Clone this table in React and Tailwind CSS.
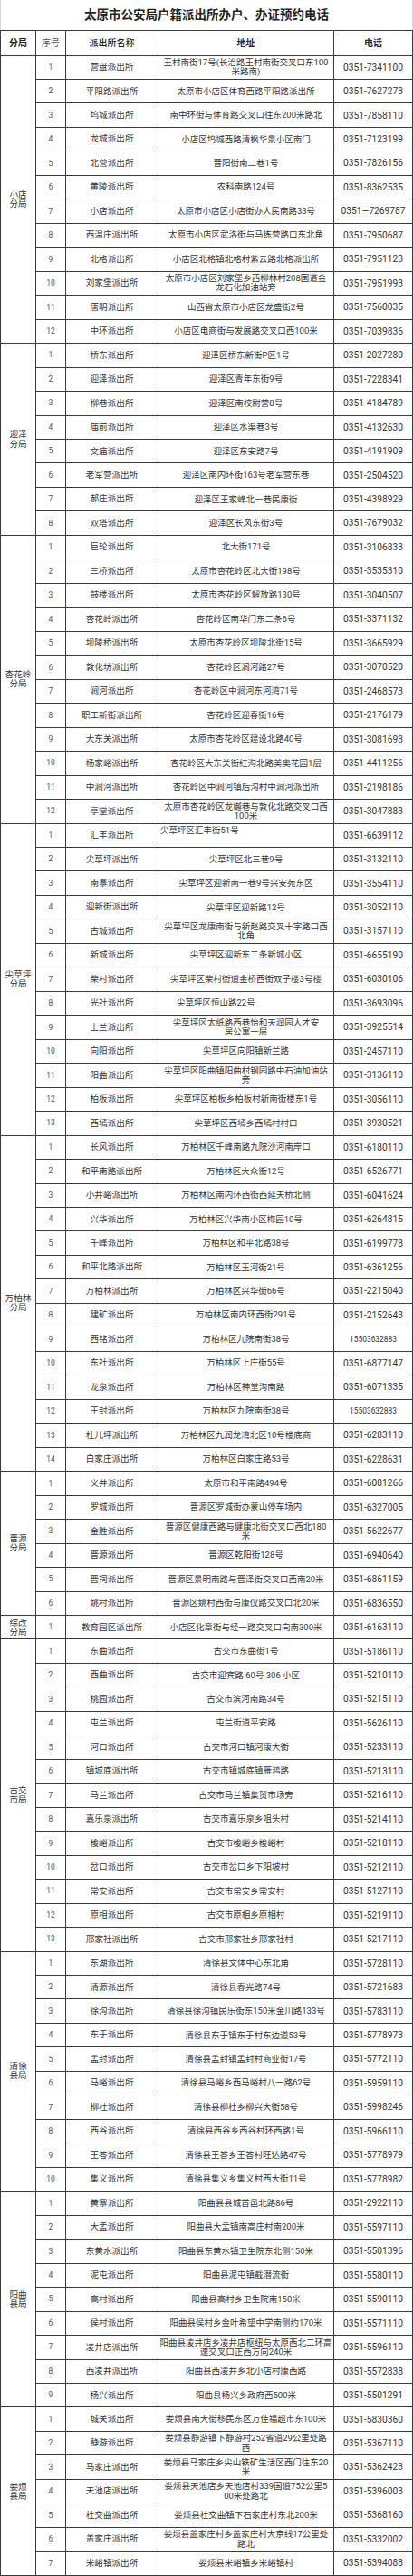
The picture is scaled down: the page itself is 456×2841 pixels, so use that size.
const FONT = { fontFamily: 'Roboto, "Noto Sans CJK SC", sans-serif' };

const groups = [
  {
    name: '小店\n分局',
    rows: [
      ['营盘派出所', '王村南街17号(长治路王村南街交叉口东100\n米路南)', '0351-7341100'],
      ['平阳路派出所', '太原市小店区体育西路平阳路派出所', '0351-7627273'],
      ['坞城派出所', '南中环街与体育路交叉口往东200米路北', '0351-7858110'],
      ['龙城派出所', '小店区坞城西路清枫华景小区南门', '0351-7123199'],
      ['北营派出所', '晋阳街南二巷1号', '0351-7826156'],
      ['黄陵派出所', '农科南路124号', '0351-8362535'],
      ['小店派出所', '太原市小店区小店街办人民南路33号', '0351—7269787'],
      ['西温庄派出所', '太原市小店区武洛街与马练营路口东北角', '0351-7950687'],
      ['北格派出所', '小店区北格镇北格村紫云路北格派出所', '0351-7951123'],
      ['刘家堡派出所', '太原市小店区刘家堡乡西柳林村208国道金\n龙石化加油站旁', '0351-7951993'],
      ['唐明派出所', '山西省太原市小店区龙盛街2号', '0351-7560035'],
      ['中环派出所', '小店区电商街与发展路交叉口西100米', '0351-7039836'],
    ],
  },
  {
    name: '迎泽\n分局',
    rows: [
      ['桥东派出所', '迎泽区桥东新街P区1号', '0351-2027280'],
      ['迎泽派出所', '迎泽区青年东街9号', '0351-7228341'],
      ['柳巷派出所', '迎泽区南校尉营8号', '0351-4184789'],
      ['庙前派出所', '迎泽区水渠巷3号', '0351-4132630'],
      ['文庙派出所', '迎泽区东安路7号', '0351-4191909'],
      ['老军营派出所', '迎泽区南内环街163号老军营东巷', '0351-2504520'],
      ['郝庄派出所', '迎泽区王家峰北一巷民康街', '0351-4398929'],
      ['双塔派出所', '迎泽区长风东街3号', '0351-7679032'],
    ],
  },
  {
    name: '杏花岭\n分局',
    rows: [
      ['巨轮派出所', '北大街171号', '0351-3106833'],
      ['三桥派出所', '太原市杏花岭区北大街198号', '0351-3535310'],
      ['鼓楼派出所', '太原市杏花岭区解放路130号', '0351-3040507'],
      ['杏花岭派出所', '杏花岭区南华门东二条6号', '0351-3371132'],
      ['坝陵桥派出所', '太原市杏花岭区坝陵北街15号', '0351-3665929'],
      ['敦化坊派出所', '杏花岭区涧河路27号', '0351-3070520'],
      ['涧河派出所', '杏花岭区中涧河东河湾71号', '0351-2468573'],
      ['职工新街派出所', '杏花岭区迎春街16号', '0351-2176179'],
      ['大东关派出所', '太原市杏花岭区建设北路40号', '0351-3081693'],
      ['杨家峪派出所', '杏花岭区大东关街红沟北路美奥花园1层', '0351-4411256'],
      ['中涧河派出所', '杏花岭区中涧河镇后沟村中涧河派出所', '0351-2198186'],
      ['享堂派出所', '太原市杏花岭区龙樾巷与敦化北路交叉口西\n100米', '0351-3047883'],
    ],
  },
  {
    name: '尖草坪\n分局',
    rows: [
      ['汇丰派出所', '尖草坪区汇丰街51号', '0351-6639112', 'top'],
      ['尖草坪派出所', '尖草坪区北三巷9号', '0351-3132110'],
      ['南寨派出所', '尖草坪区迎新南一巷9号兴安苑东区', '0351-3554110'],
      ['迎新街派出所', '尖草坪区迎新路12号', '0351-3052110'],
      ['古城派出所', '尖草坪区龙康南街与新赵路交叉十字路口西\n北角', '0351-3157110'],
      ['新城派出所', '尖草坪区迎新东二条新城小区', '0351-6655190'],
      ['柴村派出所', '尖草坪区柴村街道金桥西街双子楼3号楼', '0351-6030106'],
      ['光社派出所', '尖草坪区恒山路22号', '0351-3693096', 'left'],
      ['上兰派出所', '尖草坪区太纸路西巷怡和天润园人才安\n居公寓一层', '0351-3925514'],
      ['向阳派出所', '尖草坪区向阳镇新兰路', '0351-2457110'],
      ['阳曲派出所', '尖草坪区阳曲镇阳曲村钢园路中石油加油站\n旁', '0351-3136110'],
      ['柏板派出所', '尖草坪区柏板乡柏板村新南街楼东1号', '0351-3056110'],
      ['西墕派出所', '尖草坪区西墕乡西墕村村口', '0351-3930521'],
    ],
  },
  {
    name: '万柏林\n分局',
    rows: [
      ['长风派出所', '万柏林区千峰南路九院沙河南岸口', '0351-6180110'],
      ['和平南路派出所', '万柏林区大众街12号', '0351-6526771'],
      ['小井峪派出所', '万柏林区南内环西街西延天桥北侧', '0351-6041624'],
      ['兴华派出所', '万柏林区兴华南小区梅园10号', '0351-6264815'],
      ['千峰派出所', '万柏林区和平北路38号', '0351-6199778'],
      ['和平北路派出所', '万柏林区玉河街21号', '0351-6361256'],
      ['万柏林派出所', '万柏林区兴华街66号', '0351-2215040'],
      ['建矿派出所', '万柏林区南内环西街291号', '0351-2152643'],
      ['西铭派出所', '万柏林区九院南街38号', '15503632883'],
      ['东社派出所', '万柏林区上庄街55号', '0351-6877147'],
      ['龙泉派出所', '万柏林区神堂沟南路', '0351-6071335'],
      ['王封派出所', '万柏林区九院南街38号', '15503632883'],
      ['杜儿坪派出所', '万柏林区九润龙湾北区10号楼底商', '0351-6283110'],
      ['白家庄派出所', '万柏林区白家庄路53号', '0351-6228631'],
    ],
  },
  {
    name: '晋源\n分局',
    rows: [
      ['义井派出所', '太原市和平南路494号', '0351-6081266'],
      ['罗城派出所', '晋源区罗城街办蒙山停车场内', '0351-6327005'],
      ['金胜派出所', '晋源区健康西路与健康北街交叉口西北180\n米', '0351-5622677'],
      ['晋源派出所', '晋源区乾阳街128号', '0351-6940640'],
      ['晋祠派出所', '晋源区景明南路与晋泽街交叉口西南20米', '0351-6861159'],
      ['姚村派出所', '晋源区姚村西街与康仪路交叉口北20米', '0351-6836550'],
    ],
  },
  {
    name: '综改\n分局',
    rows: [['教育园区派出所', '小店区化章街与经一路交叉口向南300米', '0351-6163110']],
  },
  {
    name: '古交\n市局',
    rows: [
      ['东曲派出所', '古交市东曲街1号', '0351-5186110'],
      ['西曲派出所', '古交市迎宾路 60号 306 小区', '0351-5210110'],
      ['桃园派出所', '古交市滨河南路34号', '0351-5215110'],
      ['屯兰派出所', '屯兰街道平安路', '0351-5626110'],
      ['河口派出所', '古交市河口镇河康大街', '0351-5233110'],
      ['镇城底派出所', '古交市镇城底镇雁鸿路', '0351-5213110'],
      ['马兰派出所', '古交市马兰镇集贸市场旁', '0351-5216110'],
      ['嘉乐泉派出所', '古交市嘉乐泉乡咀头村', '0351-5214110'],
      ['梭峪派出所', '古交市梭峪乡梭峪村', '0351-5218110'],
      ['岔口派出所', '古交市岔口乡下阳坡村', '0351-5212110'],
      ['常安派出所', '古交市常安乡常安村', '0351-5127110'],
      ['原相派出所', '古交市原相乡原相村', '0351-5219110'],
      ['邢家社派出所', '古交市邢家社乡邢家社村', '0351-5217110'],
    ],
  },
  {
    name: '清徐\n县局',
    rows: [
      ['东湖派出所', '清徐县文体中心东北角', '0351-5728110'],
      ['清源派出所', '清徐县春光路74号', '0351-5721683'],
      ['徐沟派出所', '清徐县徐沟镇民乐街东150米金川路133号', '0351-5783110'],
      ['东于派出所', '清徐县东于镇东于村东边道53号', '0351-5778973'],
      ['孟封派出所', '清徐县孟封镇孟封村商业街17号', '0351-5772110'],
      ['马峪派出所', '清徐县马峪乡西马峪村八一路62号', '0351-5959110'],
      ['柳杜派出所', '清徐县柳杜乡柳兴大街58号', '0351-5998246'],
      ['西谷派出所', '清徐县西谷乡西谷村环西路1号', '0351-5966110'],
      ['王答派出所', '清徐县王答乡王答村旺达路47号', '0351-5778979'],
      ['集义派出所', '清徐县集义乡集义村西大街11号', '0351-5778982'],
    ],
  },
  {
    name: '阳曲\n县局',
    rows: [
      ['黄寨派出所', '阳曲县县城首邑北路86号', '0351-2922110'],
      ['大盂派出所', '阳曲县大盂镇南高庄村南200米', '0351-5597110'],
      ['东黄水派出所', '阳曲县东黄水镇卫生院东北侧150米', '0351-5501396'],
      ['泥屯派出所', '阳曲县泥屯镇截潜流街', '0351-5580110'],
      ['高村派出所', '阳曲县高村乡卫生院南150米', '0351-5590110'],
      ['侯村派出所', '阳曲县侯村乡金叶希望中学南侧约170米', '0351-5571110'],
      ['凌井店派出所', '阳曲县凌井店乡凌井店枢纽与太原西北二环高\n速交叉口正西方向240米', '0351-5596110'],
      ['西凌井派出所', '阳曲县西凌井乡北小店村康西路', '0351-5572838'],
      ['杨兴派出所', '阳曲县杨兴乡政府西500米', '0351-5501291'],
    ],
  },
  {
    name: '娄烦\n县局',
    rows: [
      ['城关派出所', '娄烦县南大街移民东区万佳福超市东100米', '0351-5830360'],
      ['静游派出所', '娄烦县静游镇下静游村252省道29公里处路\n西', '0351-5367110'],
      ['马家庄派出所', '娄烦县马家庄乡尖山铁矿生活区西门往东20\n米', '0351-5362423'],
      ['天池店派出所', '娄烦县天池店乡天池店村339国道752公里5\n00米处路北', '0351-5396003'],
      ['杜交曲派出所', '娄烦县杜交曲镇下石家庄村东北200米', '0351-5368160'],
      ['盖家庄派出所', '娄烦县盖家庄村乡盖家庄村大京线17公里处\n路北', '0351-5332002'],
      ['米峪镇派出所', '娄烦县米峪镇乡米峪镇村', '0351-5394088'],
    ],
  },
];

function Row({ row, index }) {
  const [name, addr, phone, align] = row;
  const mobile = !phone.startsWith('0351');
  let addrClass = 'flex items-center justify-center text-center';
  if (align === 'top') addrClass = 'flex items-start justify-start text-left pl-[2px] pt-[2px]';
  if (align === 'left') addrClass = 'flex items-center justify-start text-left pl-[20px]';

  return (
    <div className="grid grid-cols-[33px_102px_194px_87px] h-[26.47px]">
      <div className="flex items-center justify-center border-r border-b border-[#3a3a3a] text-[8.5px] text-[#555]">
        {index + 1}
      </div>
      <div className="flex items-center justify-center border-r border-b border-[#3a3a3a] text-[9.6px] text-[#333]">
        {name}
      </div>
      <div className={`${addrClass} border-r border-b border-[#3a3a3a] text-[9.5px] leading-[1.08] text-[#333] whitespace-pre overflow-hidden`}>
        {addr}
      </div>
      <div
        className={`flex items-center justify-center border-r border-b border-[#3a3a3a] text-[#333] ${
          mobile ? 'text-[8.4px]' : 'text-[10.2px]'
        }`}
      >
        {phone}
      </div>
    </div>
  );
}

function Group({ group }) {
  return (
    <div className="flex">
      <div className="w-[39px] shrink-0 flex items-center justify-center border-r border-b border-[#3a3a3a] text-[9.6px] leading-[1.05] text-[#333] text-center whitespace-pre">
        {group.name}
      </div>
      <div className="flex flex-col">
        {group.rows.map((row, i) => (
          <Row key={i} row={row} index={i} />
        ))}
      </div>
    </div>
  );
}

export default function App() {
  return (
    <div className="w-[456px] bg-white" style={FONT}>
      <div className="h-[33px] flex items-center justify-center border-x border-[#d6d6d6] text-[13.5px] font-bold text-[#222]">
        太原市公安局户籍派出所办户、办证预约电话
      </div>
      <div className="border-t border-l border-[#3a3a3a]">
        <div className="grid grid-cols-[39px_33px_102px_194px_87px] h-[27.5px] text-[10px] text-[#222]">
          <div className="flex items-center justify-center border-r border-b border-[#3a3a3a] font-bold">分局</div>
          <div className="flex items-center justify-center border-r border-b border-[#3a3a3a] text-[#555]">序号</div>
          <div className="flex items-center justify-center border-r border-b border-[#3a3a3a] font-medium">派出所名称</div>
          <div className="flex items-center justify-center border-r border-b border-[#3a3a3a] font-bold">地址</div>
          <div className="flex items-center justify-center border-r border-b border-[#3a3a3a] font-bold">电话</div>
        </div>
        {groups.map((g, i) => (
          <Group key={i} group={g} />
        ))}
      </div>
    </div>
  );
}
